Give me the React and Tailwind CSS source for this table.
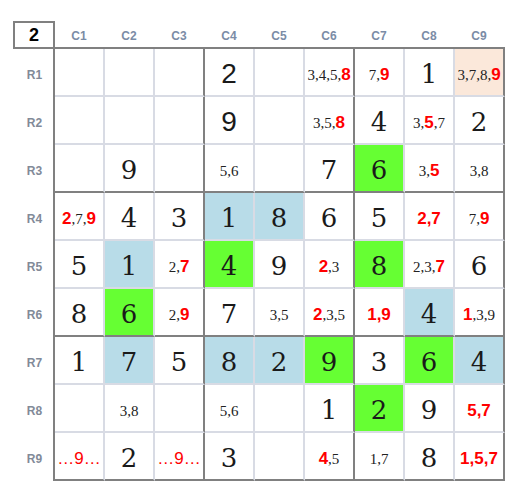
import React from "react";

// "!" before a digit marks a red candidate, "|b" "|g" "|p" set the cell colour
const board = [
  ["", "", "", "2s", "", "3,4,5,!8", "7,!9", "1", "3,7,8,!9|p"],
  ["", "", "", "9s", "", "3,5,!8", "4", "3,!5,7", "2"],
  ["", "9", "", "5,6", "", "7", "6|g", "3,!5", "3,8"],
  ["!2,7,!9", "4", "3", "1|b", "8|b", "6", "5", "!2,!7", "7,!9"],
  ["5", "1|b", "2,!7", "4|g", "9", "!2,3", "8|g", "2,3,!7", "6"],
  ["8", "6|g", "2,!9", "7", "3,5", "!2,3,5", "!1,!9", "4|b", "!1,3,9"],
  ["1", "7|b", "5", "8|b", "2|b", "9|g", "3", "6|g", "4|b"],
  ["", "3,8", "", "5,6", "", "1", "2|g", "9", "!5,!7"],
  ["dots", "2", "dots", "3", "", "!4,5", "1,7", "8", "!1,!5,!7"],
];

const bgs = { b: "bg-[#b8dce8]", g: "bg-[#66ff33]", p: "bg-[#fbe8da]" };

function Candidates({ text }) {
  const items = text.split(",").map((t) => ({ d: t.replace("!", ""), red: t.startsWith("!") }));
  const out = [];
  items.forEach((it, i) => {
    if (i > 0) {
      const redComma = items[i - 1].red && it.red;
      out.push(
        <span
          key={"c" + i}
          className={
            redComma
              ? "font-['Liberation_Sans',sans-serif] font-bold text-[17px] text-[#ff0000]"
              : "font-['Liberation_Serif',serif] text-[15px] text-[#222]"
          }
        >
          ,
        </span>
      );
    }
    out.push(
      <span
        key={"d" + i}
        className={
          it.red
            ? "font-['Liberation_Sans',sans-serif] font-bold text-[17px] text-[#ff0000]"
            : "font-['Liberation_Serif',serif] text-[15px] text-[#222]"
        }
      >
        {it.d}
      </span>
    );
  });
  return <span className="whitespace-nowrap leading-none">{out}</span>;
}

function Cell({ raw, row, col }) {
  const [val, bg] = raw.split("|");
  const right = col % 3 === 2 ? "border-r-[#808080]" : "border-r-[#d8dbe4]";
  const bottom = row % 3 === 2 ? "border-b-[#808080]" : "border-b-[#d8dbe4]";
  let content = null;
  if (val === "dots") {
    content = (
      <span className="font-['Liberation_Sans',sans-serif] text-[17px] text-[#ff0000] leading-none whitespace-nowrap">
        …9…
      </span>
    );
  } else if (val.includes(",")) {
    content = <Candidates text={val} />;
  } else if (val.endsWith("s")) {
    content = (
      <span className="font-['Liberation_Sans',sans-serif] text-[28px] text-[#1a1a1a] leading-none">
        {val[0]}
      </span>
    );
  } else if (val) {
    content = (
      <span className="font-['DejaVu_Serif',serif] text-[26px] text-[#1a1a1a] leading-none">{val}</span>
    );
  }
  return (
    <div
      className={`w-[50px] h-[48px] border-r-2 border-b-2 ${right} ${bottom} ${bg ? bgs[bg] : "bg-white"} flex items-center justify-center pt-[4px] overflow-hidden`}
    >
      {content}
    </div>
  );
}

export default function App() {
  return (
    <div className="w-[528px] h-[501px] bg-white pt-[21px] pl-[13px]">
      <div className="flex">
        <div className="w-[42px] h-[28px] border-2 border-[#808080] flex items-center justify-center font-['Liberation_Sans',sans-serif] font-bold text-[18px] text-black">
          2
        </div>
        {["C1", "C2", "C3", "C4", "C5", "C6", "C7", "C8", "C9"].map((c) => (
          <div
            key={c}
            className="w-[50px] h-[28px] border-b-2 border-[#808080] flex items-center justify-center pt-[3px] pr-[2px] font-['Liberation_Sans',sans-serif] font-bold text-[12px] text-[#7b8ca6]"
          >
            {c}
          </div>
        ))}
      </div>
      <div className="flex">
        <div className="w-[40px] flex flex-col">
          {board.map((_, r) => (
            <div
              key={r}
              className="h-[48px] flex items-center justify-center pt-[4px] pl-[3px] font-['Liberation_Sans',sans-serif] font-bold text-[12px] text-[#828a98]"
            >
              R{r + 1}
            </div>
          ))}
        </div>
        <div className="border-l-2 border-[#808080]">
          {board.map((row, r) => (
            <div key={r} className="flex">
              {row.map((raw, c) => (
                <Cell key={c} raw={raw} row={r} col={c} />
              ))}
            </div>
          ))}
        </div>
      </div>
    </div>
  );
}
